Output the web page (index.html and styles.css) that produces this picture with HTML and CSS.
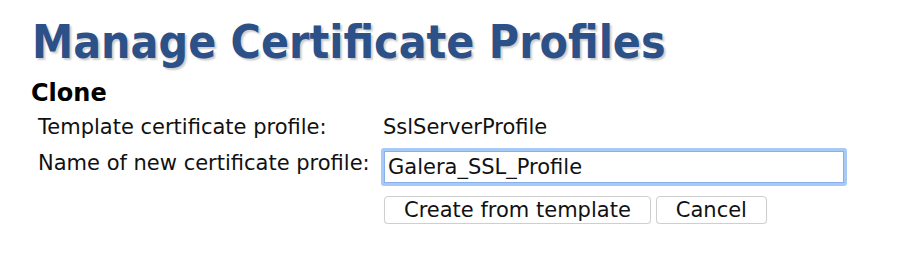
FILE: index.html
```html
<!DOCTYPE html>
<html lang="en">
<head>
  <meta charset="UTF-8">
  <title>Manage Certificate Profiles</title>
  <link rel="stylesheet" href="styles.css">
</head>
<body>
  <h1>Manage Certificate Profiles</h1>
  <h2>Clone</h2>

  <form class="clone-form">
    <div class="form-row">
      <span class="label">Template certificate profile:</span>
      <span class="value">SslServerProfile</span>
    </div>
    <div class="form-row name-row">
      <label class="label" for="newName">Name of new certificate profile:</label>
      <input type="text" id="newName" value="Galera_SSL_Profile">
    </div>
    <div class="form-row button-row">
      <span class="label"></span>
      <div class="buttons">
        <button type="submit">Create from template</button>
        <button type="button">Cancel</button>
      </div>
    </div>
  </form>
</body>
</html>
```

FILE: styles.css
```css
/* Base */
body {
  margin: 0;
  padding: 16px 0 0 32px;
  font-family: 'DejaVu Sans', Verdana, sans-serif;
  font-size: 21px;
  line-height: 24px;
  color: #111;
  background: #fff;
}
h1 {
  margin: 0;
  font-family: 'DejaVu Sans Condensed', 'DejaVu Sans', Verdana, sans-serif;
  font-stretch: condensed;
  font-size: 46px;
  line-height: 52px;
  font-weight: bold;
  color: #2c5088;
  text-shadow: 2px 2px 2px rgba(0,0,0,0.2);
}
h2 {
  margin: 11px 0 0 -1px;
  font-size: 24px;
  line-height: 28px;
  font-weight: bold;
  color: #000;
}
/* Form rows */
.clone-form {
  display: flex;
  flex-direction: column;
  margin-top: 8px;
  padding-left: 6px;
}
.form-row {
  display: flex;
  align-items: flex-start;
}
.name-row {
  margin-top: 9px;
}
.name-row .label {
  padding-top: 3px;
}
.button-row {
  margin-top: 10px;
}
.label {
  width: 343px;
  flex: none;
}
.value {
  padding-left: 2px;
}
input[type="text"] {
  box-sizing: border-box;
  width: 466px;
  height: 38px;
  padding: 0 4px;
  font-family: inherit;
  font-size: 21px;
  color: #111;
  border: 3px solid #a6c9f5;
  border-radius: 3px;
  box-shadow: inset 0 0 0 1px #86b1ea;
  outline: none;
}
.buttons {
  display: flex;
  gap: 5px;
  padding-left: 3px;
}
button {
  box-sizing: border-box;
  height: 28px;
  padding: 0 19px;
  font-family: inherit;
  font-size: 21px;
  line-height: 24px;
  color: #111;
  background: #fff;
  border: 1px solid #cfcfcf;
  border-radius: 4px;
  box-shadow: 0 1px 1px rgba(0,0,0,0.08);
}
```
